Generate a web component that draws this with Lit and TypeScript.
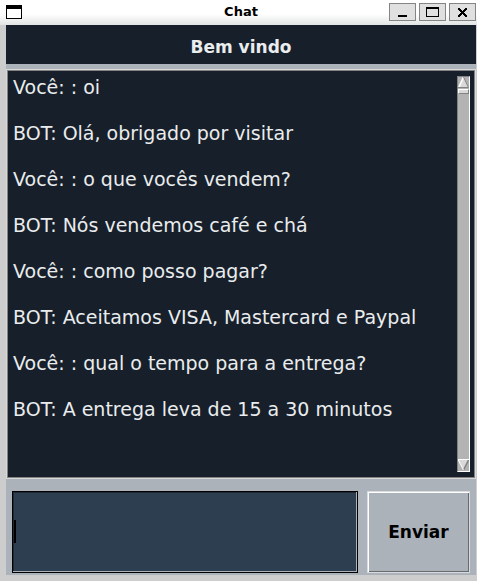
import { LitElement, html, css } from "lit";
import { customElement, property, state } from "lit/decorators.js";

interface Message {
  author: string;
  text: string;
}

@customElement("title-bar")
class TitleBar extends LitElement {
  @property() label = "";

  static styles = css`
    :host {
      display: block;
    }
    .bar {
      box-sizing: border-box;
      height: 25px;
      display: grid;
      grid-template-columns: 1fr auto 1fr;
      align-items: center;
      padding: 0 1px 1px 6px;
      background: linear-gradient(#fff 0, #fff 14px, #e2e4e4 25px);
    }
    .menu {
      display: flex;
      width: 16px;
      padding: 0;
      border: 0;
      background: none;
    }
    .title {
      margin: 0;
      font: bold 13px/16px "DejaVu Sans", sans-serif;
      color: #000;
    }
    .controls {
      display: flex;
      justify-content: flex-end;
      gap: 3px;
    }
    .control {
      box-sizing: border-box;
      width: 27px;
      height: 18px;
      padding: 0;
      border: 1px solid #858585;
      background: #e0e0e0;
      display: flex;
    }
    svg {
      display: block;
    }
  `;

  render() {
    return html`
      <header class="bar">
        <button class="menu" aria-label="Menu">
          <svg width="16" height="14" viewBox="0 0 16 14" shape-rendering="crispEdges">
            <path d="M0 0H16V14H0Z" fill="#000" />
            <path d="M1 4H15V13H1Z" fill="#fff" />
          </svg>
        </button>
        <h1 class="title">${this.label}</h1>
        <div class="controls">
          <button class="control" aria-label="Minimizar">
            <svg width="25" height="16" viewBox="0 0 25 16" shape-rendering="crispEdges">
              <path d="M8 11H17V13H8Z" />
            </svg>
          </button>
          <button class="control" aria-label="Maximizar">
            <svg width="25" height="16" viewBox="0 0 25 16" shape-rendering="crispEdges">
              <path d="M6 3H19V13H6ZM7 5V12H18V5Z" fill-rule="evenodd" />
            </svg>
          </button>
          <button class="control" aria-label="Fechar">
            <svg width="25" height="16" viewBox="0 0 25 16" shape-rendering="crispEdges">
              <path
                d="M8 4H10V5H11V6H12V7H13V6H14V5H15V4H17V6H16V7H15V8H14V9H15V10H16V11H17V13H15V12H14V11H13V10H12V11H11V12H10V13H8V11H9V10H10V9H11V8H10V7H9V6H8Z"
              />
            </svg>
          </button>
        </div>
      </header>
    `;
  }
}

@customElement("scroll-rail")
class ScrollRail extends LitElement {
  static styles = css`
    :host {
      display: flex;
    }
    .rail {
      box-sizing: border-box;
      width: 13px;
      display: flex;
      flex-direction: column;
      background: #b3b3b3;
      border: 1px solid;
      border-color: #828282 #fff #fff #828282;
    }
    .arrow {
      display: block;
      padding: 0;
      border: 0;
      background: none;
      height: 12px;
    }
    .thumb {
      box-sizing: border-box;
      height: 5px;
      background: #d9d9d9;
      border: 1px solid;
      border-color: #fff #828282 #828282 #fff;
    }
    .space {
      flex: 1;
    }
    svg {
      display: block;
    }
  `;

  render() {
    return html`
      <div class="rail">
        <button class="arrow" aria-label="Rolar para cima">
          <svg width="11" height="12" viewBox="0 0 11 12">
            <path d="M5.500 0L11 11H0Z" fill="#d9d9d9" />
            <path d="M5.500 0L0.500 11" stroke="#fff" stroke-width="1.500" />
            <path d="M5.500 0L10.500 10.500H0" fill="none" stroke="#828282" />
          </svg>
        </button>
        <div class="thumb"></div>
        <div class="space"></div>
        <button class="arrow" aria-label="Rolar para baixo">
          <svg width="11" height="12" viewBox="0 0 11 12">
            <path d="M0 1H11L5.500 11Z" fill="#d9d9d9" />
            <path d="M10.500 1L5.500 11" stroke="#828282" stroke-width="1.500" />
            <path d="M11 0.500H0L5.500 11" fill="none" stroke="#fff" />
          </svg>
        </button>
      </div>
    `;
  }
}

@customElement("app-root")
class AppRoot extends LitElement {
  @state() private messages: Message[] = [
    { author: "Você: ", text: "oi" },
    { author: "BOT", text: "Olá, obrigado por visitar" },
    { author: "Você: ", text: "o que vocês vendem?" },
    { author: "BOT", text: "Nós vendemos café e chá" },
    { author: "Você: ", text: "como posso pagar?" },
    { author: "BOT", text: "Aceitamos VISA, Mastercard e Paypal" },
    { author: "Você: ", text: "qual o tempo para a entrega?" },
    { author: "BOT", text: "A entrega leva de 15 a 30 minutos" },
  ];

  static styles = css`
    :host {
      display: block;
      font-family: "DejaVu Sans", sans-serif;
    }
    .window {
      min-height: 100vh;
      display: flex;
      flex-direction: column;
      background: #cdcdcd;
    }
    .content {
      flex: 1;
      display: flex;
      flex-direction: column;
      margin: 0 1px 6px 6px;
      background: #abb2b9;
    }
    .welcome {
      margin: 0 0 5px;
      padding: 11px 0 5px;
      background: #17202a;
      color: #eaecee;
      font-size: 17px;
      line-height: 23px;
      font-weight: bold;
      text-align: center;
    }
    .log {
      flex: 1;
      display: flex;
      padding: 5px 4px 5px 5px;
      background: #17202a;
      border: 1px solid #828282;
      outline: 1px solid #d9d9d9;
      margin: 1px;
    }
    .messages {
      flex: 1;
      margin: 0;
      padding: 0;
      list-style: none;
      color: #eaecee;
      font-size: 19px;
      line-height: 23px;
    }
    .message {
      margin-bottom: 23px;
    }
    .compose {
      display: flex;
      gap: 9px;
      height: 82px;
      padding: 12px 6px 2px;
    }
    .field {
      flex: 1;
      min-width: 0;
      position: relative;
      display: flex;
    }
    .entry {
      box-sizing: border-box;
      flex: 1;
      min-width: 0;
      padding: 0 2px;
      border: 1px solid #000;
      border-radius: 0;
      outline: none;
      background: #2c3e50;
      box-shadow: inset -1px -1px #abb2b9, inset 1px 1px #1c2833;
      color: #eaecee;
      font: 17px/23px "DejaVu Sans", sans-serif;
    }
    .caret {
      position: absolute;
      left: 2px;
      top: 29px;
      width: 2px;
      height: 23px;
      background: #000;
    }
    .send {
      box-sizing: border-box;
      width: 103px;
      padding: 0;
      border: 1px solid #d9dcdf;
      border-radius: 0;
      background: #abb2b9;
      box-shadow: inset 1px 1px #fff, inset -1px -1px #666b70;
      color: #000;
      font: bold 17px/23px "DejaVu Sans", sans-serif;
    }
  `;

  render() {
    return html`
      <div class="window">
        <title-bar label="Chat"></title-bar>
        <main class="content">
          <h2 class="welcome">Bem vindo</h2>
          <section class="log">
            <ul class="messages">
              ${this.messages.map(
                (m) => html`<li class="message">${m.author}: ${m.text}</li>`
              )}
            </ul>
            <scroll-rail></scroll-rail>
          </section>
          <form class="compose" @submit=${(e: Event) => e.preventDefault()}>
            <div class="field">
              <input class="entry" type="text" aria-label="Mensagem" />
              <span class="caret"></span>
            </div>
            <button class="send" type="submit">Enviar</button>
          </form>
        </main>
      </div>
    `;
  }
}
